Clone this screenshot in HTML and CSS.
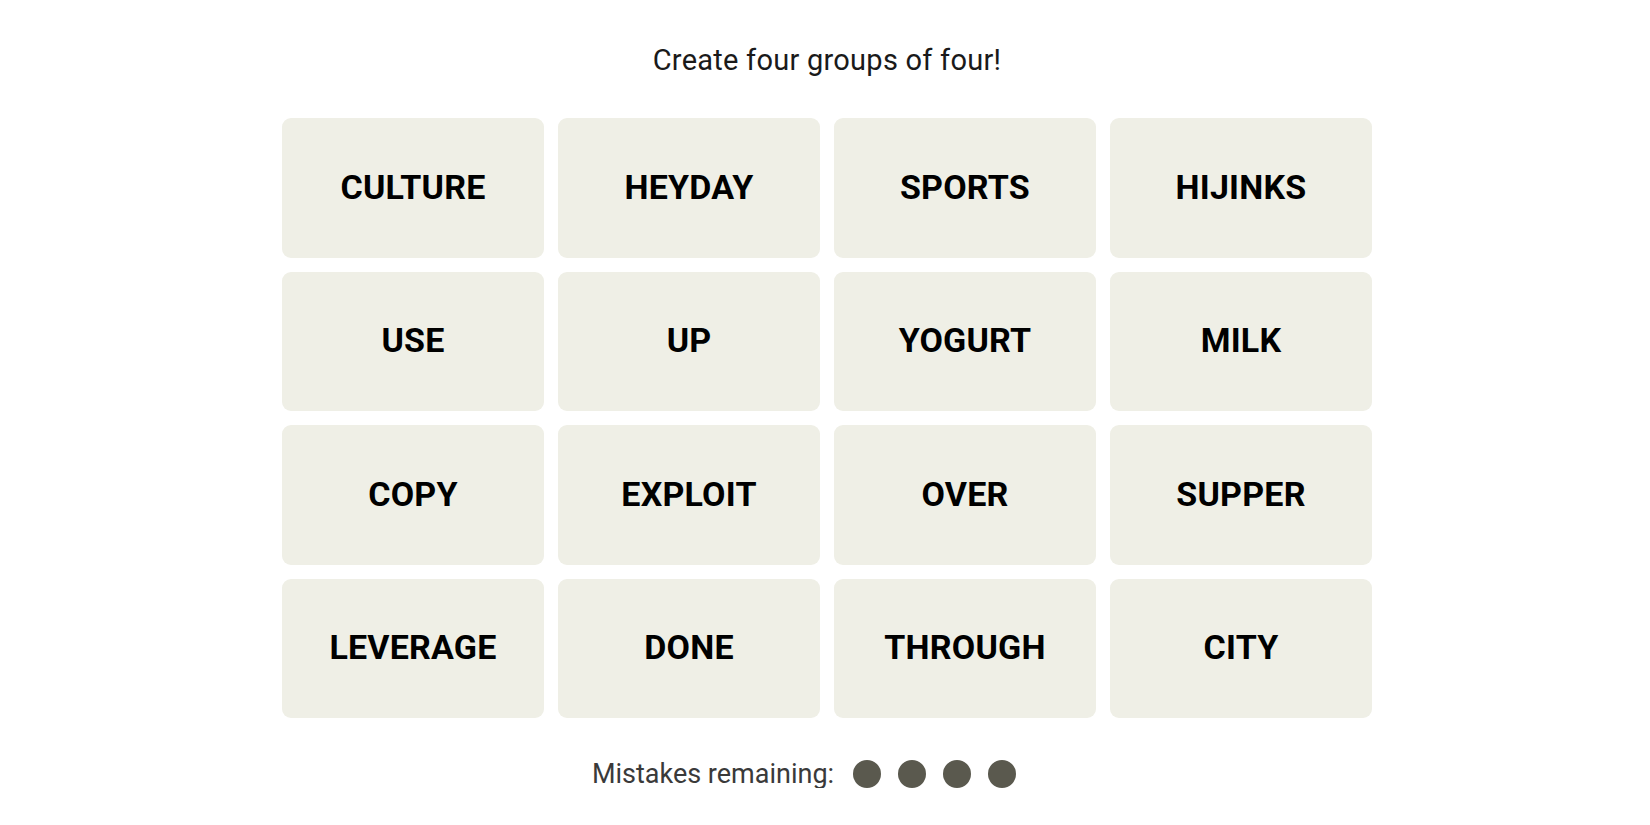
FILE: index.html
```html
<!DOCTYPE html>
<html lang="en">
<head>
<meta charset="utf-8">
<title>Connections</title>
<link rel="stylesheet" href="styles.css">
</head>
<body>
<main class="game">
  <h1 class="prompt">Create four groups of four!</h1>
  <section class="board">
    <button class="tile">CULTURE</button>
    <button class="tile">HEYDAY</button>
    <button class="tile">SPORTS</button>
    <button class="tile">HIJINKS</button>
    <button class="tile">USE</button>
    <button class="tile">UP</button>
    <button class="tile">YOGURT</button>
    <button class="tile">MILK</button>
    <button class="tile">COPY</button>
    <button class="tile">EXPLOIT</button>
    <button class="tile">OVER</button>
    <button class="tile">SUPPER</button>
    <button class="tile">LEVERAGE</button>
    <button class="tile">DONE</button>
    <button class="tile">THROUGH</button>
    <button class="tile">CITY</button>
  </section>
  <div class="mistakes">
    <span class="mistakes-label">Mistakes remaining:</span>
    <span class="dots">
      <span class="dot"></span>
      <span class="dot"></span>
      <span class="dot"></span>
      <span class="dot"></span>
    </span>
  </div>
</main>
</body>
</html>
```
FILE: styles.css
```css
html, body {
  margin: 0;
  padding: 0;
  background: #ffffff;
}

body {
  font-family: Roboto, "Liberation Sans", sans-serif;
  color: #121212;
}

.game {
  display: flex;
  flex-direction: column;
  align-items: center;
  padding-left: 4px;
  padding-top: 42px;
}

.prompt {
  margin: 0;
  font-size: 29px;
  line-height: 36px;
  letter-spacing: 0.25px;
  font-weight: 400;
  color: #1a1a1a;
}

.board {
  margin-top: 40px;
  width: 1090px;
  display: grid;
  grid-template-columns: repeat(4, 1fr);
  grid-auto-rows: 139.5px;
  gap: 14px;
}

.tile {
  border: none;
  margin: 0;
  padding: 0 0 2px 0;
  background: #efefe6;
  border-radius: 9px;
  font-family: Roboto, "Liberation Sans", sans-serif;
  font-weight: 700;
  font-size: 34px;
  letter-spacing: 0.2px;
  color: #000;
  display: flex;
  align-items: center;
  justify-content: center;
}

.mistakes {
  margin-top: 42px;
  display: flex;
  align-items: center;
  gap: 19px;
  padding-right: 46px;
  height: 28px;
}

.mistakes-label {
  font-size: 27px;
  line-height: 28px;
  font-weight: 400;
  color: #3a3a3a;
}

.dots {
  display: flex;
  gap: 17px;
}

.dot {
  width: 28px;
  height: 28px;
  border-radius: 50%;
  background: #5a594e;
}
```
